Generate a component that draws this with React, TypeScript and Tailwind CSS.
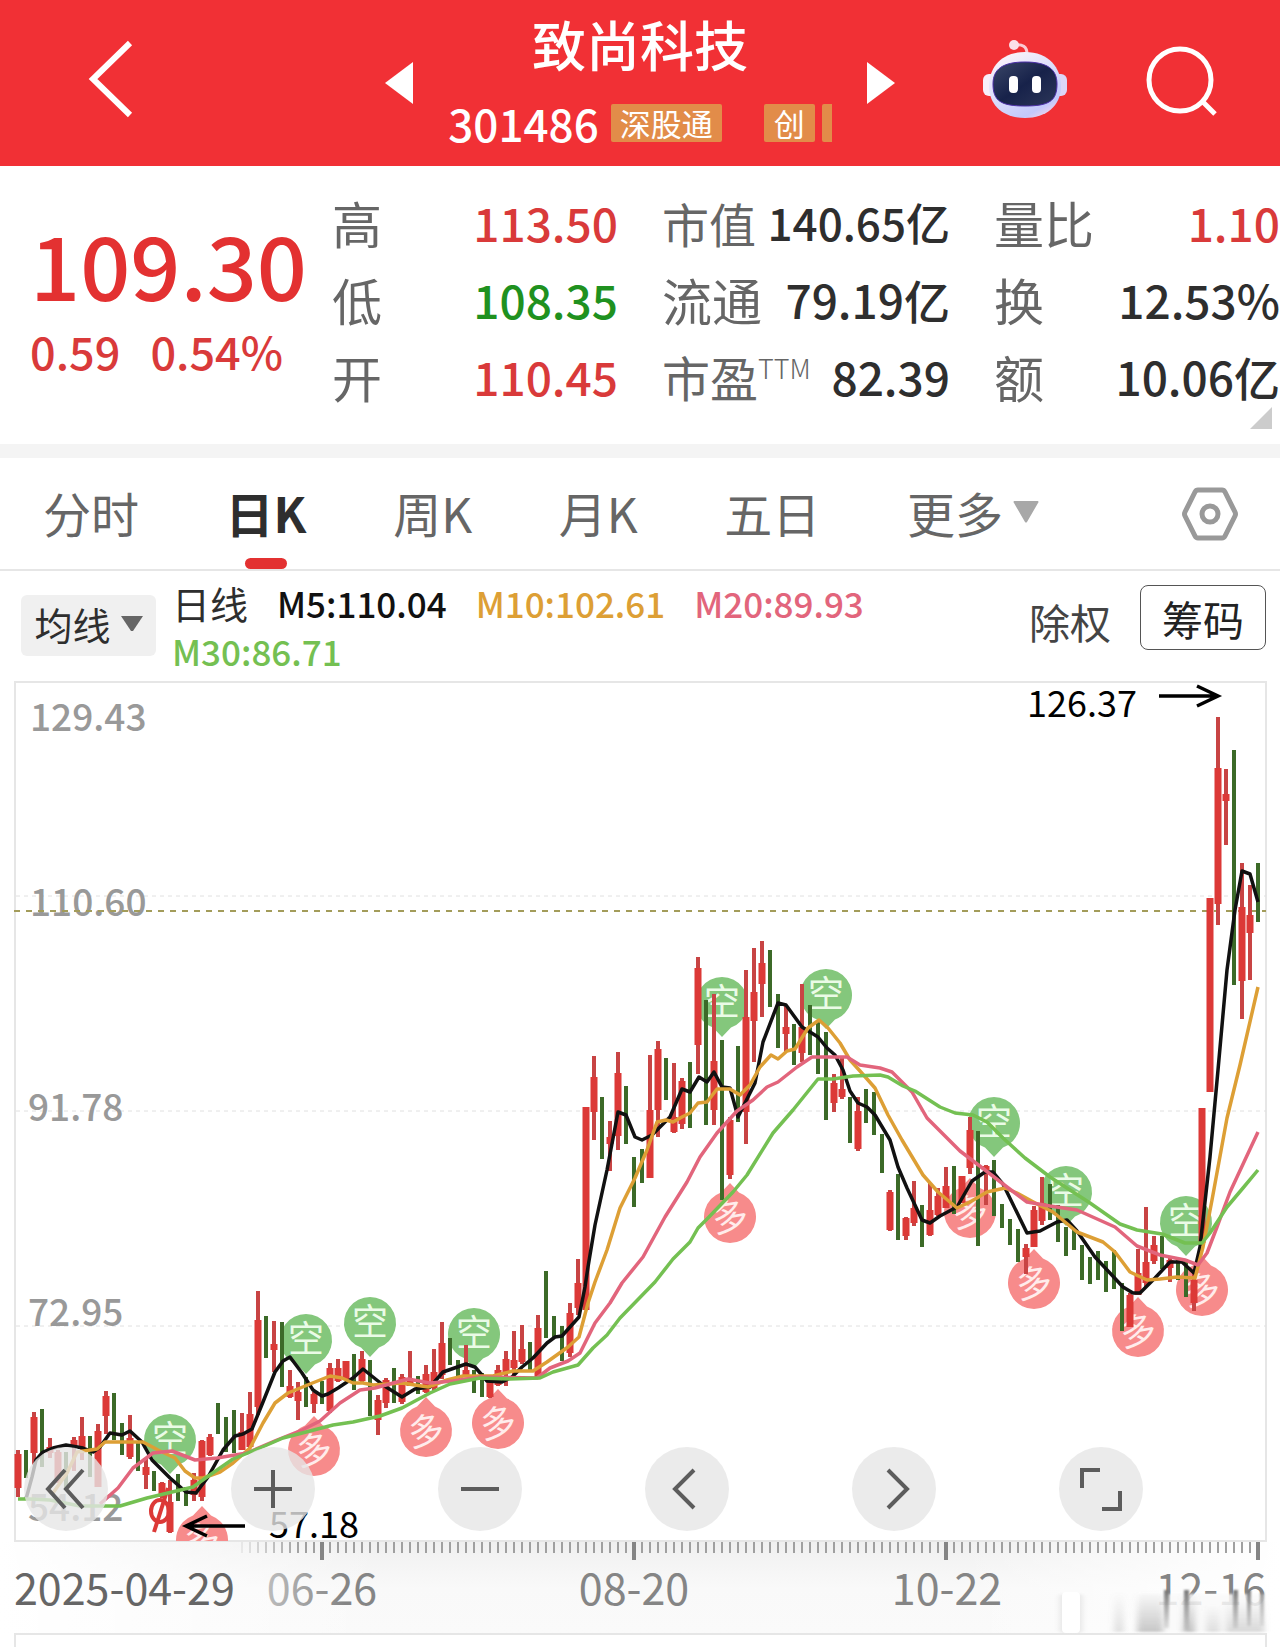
import React from "react";

type Candle = [number, number, number?, number?];

// [high, low] for falling days, [high, low, bodyTop, bodyBottom] for rising days
const candles: Candle[] = [
  [770, 817, 774, 808], [770, 798], [732, 785, 737, 773], [729, 787], [758, 778, 767, 773],
  [770, 803, 772, 802], [772, 810], [757, 791, 760, 767], [737, 780, 756, 767], [756, 797],
  [744, 807, 751, 807], [711, 754, 716, 736], [713, 760], [743, 775], [735, 779, 758, 777],
  [763, 791], [778, 809, 787, 795], [791, 811], [802, 818, 803, 817], [800, 853, 822, 852],
  [794, 821], [807, 826], [793, 821, 800, 815], [760, 821, 761, 817], [754, 776, 757, 775],
  [723, 754], [737, 772], [730, 773], [733, 770, 752, 770], [712, 768, 734, 767],
  [611, 735, 640, 727], [636, 678], [641, 692, 664, 670], [642, 707], [690, 718, 706, 717],
  [702, 740, 712, 721], [697, 727], [712, 733, 714, 724], [701, 724], [683, 733, 688, 731],
  [679, 702, 688, 701], [681, 699, 681, 699], [674, 710], [671, 703, 679, 701], [680, 736],
  [715, 755, 720, 740], [698, 728, 700, 723], [688, 723], [694, 724, 697, 722], [671, 706, 701, 706],
  [696, 714], [685, 713, 694, 712], [669, 711, 692, 708], [642, 699, 663, 695], [658, 685],
  [680, 703], [665, 697, 690, 697], [690, 713], [693, 717], [698, 718, 700, 717],
  [685, 706, 690, 705], [671, 706, 679, 692], [651, 695, 680, 688], [645, 684, 669, 682], [662, 690],
  [635, 699, 648, 698], [591, 658], [636, 658], [646, 681], [623, 677, 633, 673],
  [579, 635, 603, 628], [427, 630, 427, 630], [376, 460, 397, 432], [417, 479], [441, 491, 457, 464],
  [372, 470, 393, 456], [406, 464], [477, 527], [469, 503], [375, 498, 430, 498],
  [361, 457, 369, 430], [378, 420], [383, 453, 437, 452], [398, 449, 401, 444], [382, 448],
  [277, 394, 288, 365], [320, 445], [314, 445, 381, 430], [360, 520], [437, 499, 440, 495],
  [366, 442], [290, 464, 337, 432], [268, 382, 312, 341], [261, 337, 283, 304], [270, 327],
  [314, 368], [325, 372, 347, 354], [344, 385], [304, 382, 347, 373], [325, 375],
  [342, 394], [352, 440], [394, 432, 403, 423], [377, 419, 409, 417], [417, 463],
  [417, 471, 431, 469], [409, 443], [412, 455], [454, 493], [510, 551, 512, 550],
  [494, 560], [537, 560, 538, 556], [501, 546, 528, 543], [525, 567], [503, 556, 530, 555],
  [508, 536, 516, 535], [487, 528, 506, 528], [486, 534], [496, 523, 496, 523], [437, 494, 450, 488],
  [451, 566], [485, 525, 486, 490], [480, 536], [524, 548], [539, 565],
  [549, 582], [564, 594, 568, 577], [526, 567, 530, 567], [497, 545, 523, 541], [504, 540],
  [525, 562], [547, 576], [550, 570], [565, 600], [577, 604],
  [571, 600], [581, 612], [570, 609], [603, 651], [613, 647, 615, 647],
  [569, 615, 593, 615], [527, 607, 582, 603], [556, 584, 565, 581], [556, 589], [578, 602, 580, 588],
  [580, 600], [579, 617], [592, 631, 600, 623], [428, 563, 428, 563], [218, 412, 218, 412],
  [37, 245, 88, 224], [89, 165, 114, 121], [70, 305], [183, 339, 227, 301], [205, 300, 235, 253],
  [183, 242],
];

const averages = [
  {
    name: "M5",
    color: "#111111",
    points:
      "26,819 32,797 36,780 43,772 53,768 66,765 83,768 93,772 100,767 110,753 122,755 130,751 142,762 152,780 170,798 186,812 196,813 208,797 223,770 235,756 243,754 252,749 263,722 275,692 283,681 290,677 302,693 313,710 322,716 328,714 338,708 353,698 363,689 383,705 402,717 415,709 430,707 443,692 466,684 475,687 487,701 502,702 512,697 522,687 533,678 547,663 555,657 562,656 570,647 579,637 585,607 588,587 595,545 607,490 618,432 626,435 635,457 642,460 652,455 670,437 682,409 690,412 699,397 707,402 714,392 722,407 730,408 738,437 755,403 763,362 778,323 786,325 802,347 818,357 827,368 835,375 843,390 850,411 858,423 867,427 875,435 890,460 898,487 907,508 922,540 930,543 940,536 957,527 972,501 985,492 993,492 1003,504 1027,553 1040,551 1057,542 1067,540 1077,551 1095,577 1123,607 1133,613 1140,613 1155,598 1170,582 1182,582 1194,593 1200,567 1210,477 1218,390 1227,290 1235,230 1242,191 1250,194 1258,222",
  },
  {
    name: "M10",
    color: "#dd9f35",
    points:
      "53,813 67,793 77,772 97,769 105,762 122,762 143,762 158,770 175,778 185,791 195,798 203,798 220,792 233,783 250,768 263,743 275,723 288,713 310,704 330,696 342,698 353,703 363,703 373,705 402,703 428,707 447,700 463,696 493,696 513,691 533,691 547,682 568,667 579,657 588,623 595,602 607,570 620,528 635,498 647,470 657,442 666,440 673,442 682,437 690,433 698,423 707,422 717,409 730,409 740,415 750,405 760,387 771,375 778,379 787,371 795,369 808,348 819,340 828,348 840,363 850,380 860,391 875,408 888,435 902,460 923,495 938,512 957,528 970,522 987,512 1005,508 1017,513 1037,524 1053,532 1077,552 1103,562 1115,572 1130,592 1147,600 1160,599 1177,597 1195,598 1203,567 1212,520 1227,438 1240,385 1258,307",
  },
  {
    name: "M20",
    color: "#e2657c",
    points:
      "100,824 118,808 133,788 153,773 172,771 195,780 217,778 247,773 277,760 302,750 320,741 340,723 360,710 375,708 408,699 430,703 453,701 480,697 537,698 550,688 568,681 580,673 595,643 610,623 622,603 643,577 665,537 687,502 700,477 717,453 737,431 753,420 767,407 778,402 797,387 812,377 847,377 860,385 880,388 892,392 912,412 927,438 960,471 985,490 1007,507 1027,522 1050,526 1077,530 1115,547 1137,566 1160,575 1185,580 1198,585 1207,573 1217,547 1230,512 1258,452",
  },
  {
    name: "M30",
    color: "#74c052",
    points:
      "18,819 30,819 50,820 80,826 120,826 147,818 193,807 207,797 233,779 260,768 283,758 333,745 353,742 380,736 402,728 430,713 450,704 480,698 510,699 540,698 553,692 578,685 593,668 607,655 620,638 655,602 673,579 690,562 698,548 708,538 733,512 747,495 773,453 793,430 818,399 833,399 853,396 880,395 888,397 903,406 915,411 940,427 955,433 973,435 987,442 1003,458 1025,478 1050,497 1090,523 1120,544 1137,550 1162,554 1185,563 1202,563 1210,553 1227,527 1243,508 1258,490",
  },
];

const shortMarks = [[170, 760], [306, 660], [370, 643], [474, 654], [722, 323], [826, 315], [994, 443], [1066, 512], [1186, 542]];
const longMarks = [[202, 860], [314, 770], [426, 751], [498, 743], [730, 537], [970, 532], [1034, 603], [1138, 651], [1202, 610]];

const minorTicks = Array.from({ length: 128 }, (_, i) => 242 + i * 8);
const majorTicks = [322, 634, 946, 1258];

const stats = [
  [
    { label: "高", value: "113.50", tone: "text-[46px] text-[#d93a3a]" },
    { label: "低", value: "108.35", tone: "text-[46px] text-[#1f911f]" },
    { label: "开", value: "110.45", tone: "text-[46px] text-[#d93a3a]" },
  ],
  [
    { label: "市值", value: "140.65亿", tone: "text-[44px] text-[#2e2e2e]", tight: true },
    { label: "流通", value: "79.19亿", tone: "text-[46px] text-[#2e2e2e]" },
    { label: "市盈", sup: "TTM", value: "82.39", tone: "text-[46px] text-[#2e2e2e]" },
  ],
  [
    { label: "量比", value: "1.10", tone: "text-[46px] text-[#d93a3a]" },
    { label: "换", value: "12.53%", tone: "text-[46px] text-[#2e2e2e]" },
    { label: "额", value: "10.06亿", tone: "text-[46px] text-[#2e2e2e]" },
  ],
];

const tabs = ["分时", "日K", "周K", "月K", "五日"];

function Header() {
  return (
    <header className="grid h-[166px] grid-cols-[1fr_510px_1fr] items-center bg-[#f13035] text-white">
      <div className="pl-[88px]">
        <button type="button" aria-label="返回" className="block">
          <svg width="46" height="86" viewBox="0 0 46 86" fill="none">
            <path d="M42 3 5 39l37 36" stroke="#fff" strokeWidth="6" />
          </svg>
        </button>
      </div>
      <div className="flex h-full items-center justify-between">
        <button type="button" aria-label="上一只">
          <svg width="28" height="42" viewBox="0 0 28 42"><path d="M28 0v42L0 21z" fill="#fff" /></svg>
        </button>
        <div className="flex flex-col items-center">
          <h1 className="text-[54px] leading-[76px] font-medium">致尚科技</h1>
          <div className="flex h-[78px] items-center pt-1">
            <span className="mr-3 text-[44px] font-medium">301486</span>
            <span className="flex h-[38px] w-[111px] items-center justify-center rounded-xs bg-[#e28c49] text-[31px]">深股通</span>
            <span className="ml-[42px] flex h-[38px] w-[51px] items-center justify-center rounded-xs bg-[#e28c49] text-[31px]">创</span>
            <span className="ml-[7px] h-[38px] w-[10px] rounded-l-xs bg-[#e28c49]" />
          </div>
        </div>
        <button type="button" aria-label="下一只">
          <svg width="28" height="42" viewBox="0 0 28 42"><path d="M0 0v42l28-21z" fill="#fff" /></svg>
        </button>
      </div>
      <div className="flex items-center justify-end gap-[78px] pr-[62px]">
        <button type="button" aria-label="智能助手">
          <svg width="86" height="86" viewBox="0 0 86 86">
            <defs>
              <linearGradient id="shell" x1="0.2" y1="0" x2="0.8" y2="1">
                <stop offset="0" stopColor="#fdf4fa" />
                <stop offset="0.5" stopColor="#d9dcfb" />
                <stop offset="0.85" stopColor="#c3c8fb" />
                <stop offset="1" stopColor="#f6d5e8" />
              </linearGradient>
              <linearGradient id="face" x1="0" y1="0" x2="1" y2="1">
                <stop offset="0" stopColor="#3a4667" />
                <stop offset="0.5" stopColor="#17224a" />
                <stop offset="1" stopColor="#2c3658" />
              </linearGradient>
            </defs>
            <path d="M32 5q13-2 13 9" fill="none" stroke="#fbc9d3" strokeWidth="3" />
            <circle cx="32" cy="5" r="5" fill="#fbdfe8" />
            <rect x="1" y="34" width="14" height="22" rx="6" fill="#f8eefa" />
            <rect x="71" y="34" width="14" height="22" rx="6" fill="#dcd6f8" />
            <path d="M43 12c24 0 36 16 36 34 0 20-15 32-36 32S7 66 7 46c0-18 12-34 36-34z" fill="url(#shell)" />
            <path d="M43 22c22 0 32 7 32 22 0 17-8 22-32 22s-32-5-32-22c0-15 10-22 32-22z" fill="url(#face)" stroke="#4b2ea8" strokeWidth="1" />
            <rect x="27" y="36" width="9" height="17" rx="4" fill="#fff" />
            <rect x="50" y="36" width="9" height="17" rx="4" fill="#fff" />
          </svg>
        </button>
        <button type="button" aria-label="搜索">
          <svg width="72" height="74" viewBox="0 0 72 74" fill="none" stroke="#fff" strokeWidth="5">
            <circle cx="34" cy="34" r="31" />
            <path d="m56 55 13 13" />
          </svg>
        </button>
      </div>
    </header>
  );
}

function Quote() {
  return (
    <section className="relative grid h-[278px] grid-cols-[332fr_330fr_332fr_286fr] pt-[18px] whitespace-nowrap">
      <div className="pl-[30px] text-[#e33131]">
        <p className="mt-[23px] text-[88px] leading-[112px] font-medium">109.30</p>
        <p className="flex gap-[30px] text-[45px] leading-[64px] font-medium text-[#d93a3a]">
          <span>0.59</span>
          <span>0.54%</span>
        </p>
      </div>
      {stats.map((column, c) => (
        <dl key={c} className={c < 2 ? "pr-[44px]" : ""}>
          {column.map((s) => (
            <div key={s.label} className="flex h-[77px] items-center justify-between leading-[77px]">
              <dt className={"flex text-[#666666] " + (s.tight ? "text-[47px]" : s.sup ? "text-[48px]" : "text-[50px]")}>
                {s.label}
                {s.sup && <sup className="top-0 text-[27px] leading-[60px] font-light">{s.sup}</sup>}
              </dt>
              <dd className={"font-medium " + s.tone}>{s.value}</dd>
            </div>
          ))}
        </dl>
      ))}
      <svg className="absolute right-2 bottom-[15px]" width="22" height="22" viewBox="0 0 22 22"><path d="M22 0v22H0z" fill="#cccccc" /></svg>
    </section>
  );
}

function Periods() {
  return (
    <div className="flex h-[113px] items-center border-b-2 border-[#e6e6e6] pr-[41px] pl-[43px]">
      <nav className="flex h-full flex-1 items-center justify-between text-[48px] text-[#666666]">
        {tabs.map((t) =>
          t === "日K" ? (
            <button key={t} type="button" aria-current="page" className="relative h-full pb-1 font-bold text-[#2e2e2e]">
              {t}
              <span className="absolute bottom-0 left-1/2 h-[11px] w-[42px] -translate-x-1/2 rounded-full bg-[#e33131]" />
            </button>
          ) : (
            <button key={t} type="button" className="h-full pb-1">{t}</button>
          ),
        )}
        <button type="button" className="flex h-full items-center gap-2.5 pb-1">
          更多
          <svg width="26" height="22" viewBox="0 0 26 22"><path d="M1 0h24q1 1 0 2L14 21q-1 1-2 0L1 2Q0 1 1 0z" fill="#a8a8a8" /></svg>
        </button>
      </nav>
      <button type="button" aria-label="设置" className="ml-[142px]">
        <svg width="58" height="54" viewBox="0 0 58 54" fill="none" stroke="#999999" strokeWidth="5" strokeLinejoin="round">
          <path d="M17 3h24q2 0 3 2l10 20q1 2 0 4L44 49q-1 2-3 2H17q-2 0-3-2L4 29q-1-2 0-4L14 5q1-2 3-2z" />
          <circle cx="29" cy="27" r="8" />
        </svg>
      </button>
    </div>
  );
}

function Legend() {
  return (
    <section className="flex h-[109px] items-start pr-[14px] pl-[21px] whitespace-nowrap">
      <button type="button" className="mt-6 flex h-[61px] w-[135px] shrink-0 items-center justify-center gap-2.5 rounded-md bg-[#f0f0f0] pb-1 text-[38px] text-[#2e2e2e]">
        均线
        <svg width="22" height="16" viewBox="0 0 22 16"><path d="M0 0h22L12 15h-2z" fill="#666666" /></svg>
      </button>
      <ul className="mt-2 ml-4 flex flex-1 flex-wrap gap-x-[29px] text-[35px] leading-[48px] font-medium">
        <li className="text-[38px] font-normal text-[#2e2e2e]">日线</li>
        <li className="text-[#111111]">M5:110.04</li>
        <li className="text-[#dd9f35]">M10:102.61</li>
        <li className="text-[#e2657c]">M20:89.93</li>
        <li className="text-[#74c052]">M30:86.71</li>
      </ul>
      <button type="button" className="mt-5 text-[41px] leading-[60px] text-[#444444]">除权</button>
      <button type="button" className="mt-[14px] ml-[29px] h-[65px] w-[126px] rounded-lg border border-[#555555] text-[41px] leading-[60px] text-[#222222]">筹码</button>
    </section>
  );
}

function Chart() {
  return (
    <svg viewBox="0 0 1280 967" className="block h-auto w-full overflow-visible" role="img" aria-label="日K线图">
      <defs>
        <clipPath id="plot"><rect x="15" y="1" width="1251" height="860" /></clipPath>
        <linearGradient id="axisFade" x1="0" x2="1" y1="0" y2="0">
          <stop offset="0" stopColor="#fff" />
          <stop offset="0.3" stopColor="#fff" stopOpacity="0" />
          <stop offset="0.75" stopColor="#fff" stopOpacity="0" />
          <stop offset="1" stopColor="#fff" />
        </linearGradient>
        <linearGradient id="axisShade" x1="0" x2="0" y1="0" y2="1">
          <stop offset="0" stopColor="#f0f0f0" />
          <stop offset="0.5" stopColor="#f9f9f9" />
          <stop offset="1" stopColor="#fafafa" />
        </linearGradient>
        <linearGradient id="dateFade" gradientUnits="userSpaceOnUse" x1="266" x2="345" y1="0" y2="0">
          <stop offset="0" stopColor="#bdbdbd" />
          <stop offset="1" stopColor="#858585" />
        </linearGradient>
        <linearGradient id="smear" x1="0" x2="0" y1="0" y2="1">
          <stop offset="0" stopColor="#8a8a8a" stopOpacity="0" />
          <stop offset="1" stopColor="#8a8a8a" stopOpacity="0.500" />
        </linearGradient>
        <linearGradient id="streak" x1="0" x2="0" y1="0" y2="1">
          <stop offset="0" stopColor="#777777" />
          <stop offset="1" stopColor="#999999" stopOpacity="0.250" />
        </linearGradient>
        <filter id="soft" x="-1" width="3"><feGaussianBlur stdDeviation="3 1" /></filter>
        <filter id="softStreak" x="-1" width="3"><feGaussianBlur stdDeviation="1 1" /></filter>
      </defs>

      <rect x="0" y="862" width="1280" height="92" fill="url(#axisShade)" />
      <rect x="0" y="862" width="1280" height="105" fill="url(#axisFade)" />
      <rect x="15" y="2" width="1251" height="859" fill="none" stroke="#e6e6e6" strokeWidth="2" />
      <path d="M15 967V954H1266V967" fill="none" stroke="#e6e6e6" strokeWidth="2" />
      <path d="M16 216H1266M16 431H1266M16 646H1266" stroke="#e0e0e0" strokeWidth="1" strokeDasharray="4 4" />

      <g fill="#999999" fontSize="37" fontWeight="500">
        <text x="30" y="51">129.43</text>
        <text x="30" y="236">110.60</text>
        <text x="28" y="441">91.78</text>
        <text x="28" y="646">72.95</text>
        <text x="28" y="841">54.12</text>
      </g>
      <path d="M14 231H1266" stroke="#a39c5a" strokeWidth="2" strokeDasharray="6 6" />

      <g clipPath="url(#plot)" fontSize="36" textAnchor="middle">
        {shortMarks.map(([x, y]) => (
          <g key={x}>
            <path transform={`translate(${x} ${y})`} d="M0 34 -9 24.500A26 26 0 1 1 9 24.500z" fill="#84c77c" />
            <text x={x} y={y + 12} fill="#eafbe6">空</text>
          </g>
        ))}
        {longMarks.map(([x, y]) => (
          <g key={x} transform={`translate(${x} ${y})`}>
            <path d="M0-34 9-24.500A26 26 0 1 1-9-24.500z" fill="#f78b8b" />
            <text y="13" fill="#ffeceb" transform="rotate(-10)">多</text>
          </g>
        ))}
      </g>

      {candles.map(([high, low, top, bottom], i) => {
        const x = 18 + i * 8;
        return top === undefined || bottom === undefined ? (
          <rect key={i} x={x - 2} y={high} width="4" height={low - high} fill="#3c6a28" />
        ) : (
          <g key={i}>
            <rect x={x - 2} y={high} width="4" height={low - high} fill="#c84444" />
            <rect x={x - 3.5} y={top} width="7" height={bottom - top} fill="#dc3937" />
          </g>
        );
      })}
      <ellipse cx="160" cy="831" rx="9" ry="11" fill="none" stroke="#dc3937" strokeWidth="4" />
      <path d="m168 808-14 44" stroke="#dc3937" strokeWidth="4" />

      {averages.map((a) => (
        <polyline key={a.name} points={a.points} fill="none" stroke={a.color} strokeWidth={3.5} strokeLinejoin="round" />
      ))}

      <g fill="#000" fontSize="36">
        <text x="1027" y="37">126.37</text>
        <text x="269" y="858">57.18</text>
      </g>
      <g fill="none" stroke="#000" strokeWidth={3.5}>
        <path d="M1159 16h58M1197 6l21 10-21 10" />
        <path d="M245 846h-58M207 836l-21 10 21 10" />
      </g>

      {minorTicks.map((x) => (
        <rect key={x} x={x - 1} y="862" width="2" height="11" fill="#a0a0a0" opacity={Math.min(1, (x - 230) / 70)} />
      ))}
      {majorTicks.map((x) => (
        <rect key={x} x={x - 2} y="862" width="4" height="18" fill="#858585" />
      ))}

      <g fontSize="43" fill="#858585">
        <text x="14" y="925" fill="#666666">2025-04-29</text>
        <text x="322" y="925" textAnchor="middle" fill="url(#dateFade)">06-26</text>
        <text x="634" y="925" textAnchor="middle">08-20</text>
        <text x="947" y="925" textAnchor="middle">10-22</text>
        <text x="1266" y="925" textAnchor="end">12-16</text>
      </g>

      <rect x="1140" y="914" width="126" height="38" fill="#fafafa" opacity="0.850" filter="url(#softStreak)" />
      <g fill="url(#smear)" filter="url(#soft)">
        <rect x="1114" y="912" width="10" height="40" opacity="0.500" />
        <rect x="1137" y="912" width="26" height="40" opacity="0.900" />
        <rect x="1183" y="912" width="12" height="40" />
        <rect x="1206" y="925" width="14" height="27" opacity="0.500" />
        <rect x="1226" y="920" width="38" height="32" opacity="0.600" />
      </g>
      <g fill="url(#streak)" filter="url(#softStreak)">
        <rect x="1164" y="910" width="5" height="38" />
        <rect x="1184" y="910" width="5" height="40" />
        <rect x="1233" y="910" width="5" height="38" />
        <rect x="1247" y="910" width="4" height="36" />
        <rect x="1260" y="912" width="4" height="34" opacity="0.700" />
      </g>
      <rect x="1060" y="914" width="22" height="39" rx="4" fill="#e4e4e4" filter="url(#soft)" />
      <rect x="1062" y="912" width="18" height="41" rx="4" fill="#fff" />
    </svg>
  );
}

const controls = [
  { label: "更早", d: "M41 23 24 42l17 19M59 23 42 42l17 19" },
  { label: "放大", d: "M23 42h38M42 23v38" },
  { label: "缩小", d: "M23 42h38" },
  { label: "左移", d: "M49 23 30 42l19 19" },
  { label: "右移", d: "M36 23l19 19-19 19" },
  { label: "全屏", d: "M23 41V23h18M61 44v18H43" },
];

function Controls() {
  return (
    <div className="absolute inset-x-0 top-[767px] flex justify-between pr-[137px] pl-6">
      {controls.map((c) => (
        <button key={c.label} type="button" aria-label={c.label} className="size-[84px] rounded-full bg-[#e6e6e6]/80">
          <svg viewBox="0 0 84 84" fill="none" stroke="#5c5c5c" strokeWidth="4"><path d={c.d} /></svg>
        </button>
      ))}
    </div>
  );
}

export default function App() {
  return (
    <main className="w-full overflow-hidden bg-white font-['Noto_Sans_CJK_SC',sans-serif]">
      <Header />
      <Quote />
      <div className="h-[14px] bg-[#f4f4f4]" />
      <Periods />
      <Legend />
      <div className="relative">
        <Chart />
        <Controls />
      </div>
    </main>
  );
}
